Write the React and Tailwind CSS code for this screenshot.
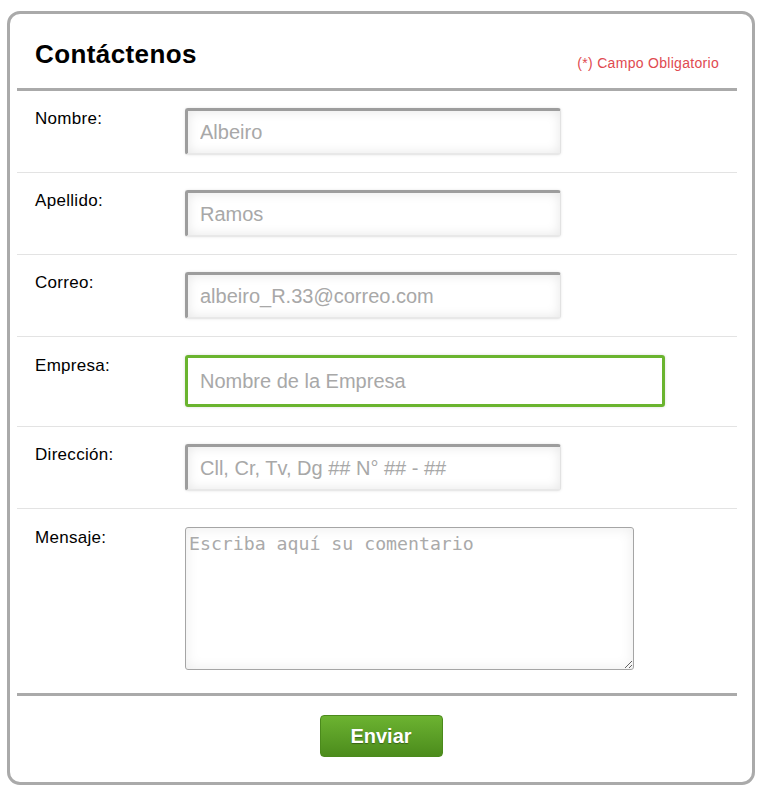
import React from 'react';

const font = { fontFamily: '"Liberation Sans", Arial, sans-serif' };

const fields = [
  { label: 'Nombre:', placeholder: 'Albeiro' },
  { label: 'Apellido:', placeholder: 'Ramos' },
  { label: 'Correo:', placeholder: 'albeiro_R.33@correo.com' },
  { label: 'Empresa:', placeholder: 'Nombre de la Empresa', focused: true },
  { label: 'Dirección:', placeholder: 'Cll, Cr, Tv, Dg ## N° ## - ##' },
];

function Row({ label, children, className }) {
  return (
    <div className={`flex border-b border-[#e3e3e3] ${className}`}>
      <label className="w-[168px] shrink-0 pl-[18px] pt-[2px] text-[17px] leading-[18px] tracking-[0.3px] text-black">
        {label}
      </label>
      {children}
    </div>
  );
}

export default function App() {
  return (
    <div className="pl-[7px] pt-[11px] bg-white" style={font}>
      <div className="w-[748px] h-[774px] border-[3px] border-[#aaaaaa] rounded-[13px] bg-white flex flex-col">
        <div className="pl-[7px] pr-[15px]">
          <div className="h-[74px] flex items-start">
            <h1 className="pl-[18px] pt-[25px] text-[26px] leading-[30px] tracking-[0.4px] font-bold text-black">Contáctenos</h1>
            <span className="ml-auto pr-[18px] pt-[41px] text-[14px] leading-[16px] tracking-[0.3px] text-[#e04a50]">
              (*) Campo Obligatorio
            </span>
          </div>
          <div className="h-[3px] bg-[#aaaaaa]" />

          {fields.map((f) =>
            f.focused ? (
              <Row key={f.label} label={f.label} className="pt-[18px] pb-[19px]">
                <input
                  placeholder={f.placeholder}
                  className="w-[480px] h-[52px] border-[3px] border-[#6ab42f] rounded-[3px] pl-[12px] text-[20px] outline-none placeholder:text-[#a8a8a8] shadow-[0_0_3px_rgba(0,0,0,0.15)]"
                  style={font}
                />
              </Row>
            ) : (
              <Row key={f.label} label={f.label} className="pt-[17px] pb-[17px]">
                <input
                  placeholder={f.placeholder}
                  className="w-[376px] h-[47px] border-t-[3px] border-l-[3px] border-r border-b-2 border-t-[#9d9d9d] border-l-[#9d9d9d] border-r-[#e2e2e2] border-b-[#e8e8e8] rounded-[3px] pl-[12px] text-[20px] outline-none placeholder:text-[#a8a8a8] shadow-[inset_0_0_12px_rgba(0,0,0,0.10),0_0_3px_rgba(0,0,0,0.10)]"
                  style={font}
                />
              </Row>
            )
          )}

          <div className="flex pt-[18px] pb-[23px]">
            <label className="w-[168px] shrink-0 pl-[18px] pt-[2px] text-[17px] leading-[18px] tracking-[0.3px] text-black">
              Mensaje:
            </label>
            <textarea
              placeholder="Escriba aquí su comentario"
              className="w-[449px] h-[143px] border border-[#a5a5a5] rounded-[3px] px-[3px] pt-[5px] text-[18.2px] leading-[22px] outline-none placeholder:text-[#aaaaaa] shadow-[inset_0_0_14px_rgba(0,0,0,0.08)]"
              style={{ fontFamily: '"DejaVu Sans Mono", "Liberation Mono", monospace' }}
            />
          </div>
          <div className="h-[3px] bg-[#aaaaaa]" />
        </div>

        <div className="flex justify-center pt-[19px]">
          <button
            className="w-[123px] h-[42px] rounded-[4px] border border-[#4b8a1c] bg-gradient-to-b from-[#6cb331] to-[#4c8c1c] text-white text-[20px] font-bold [text-shadow:0_1px_1px_rgba(0,0,0,0.35)]"
            style={font}
          >
            Enviar
          </button>
        </div>
      </div>
    </div>
  );
}
